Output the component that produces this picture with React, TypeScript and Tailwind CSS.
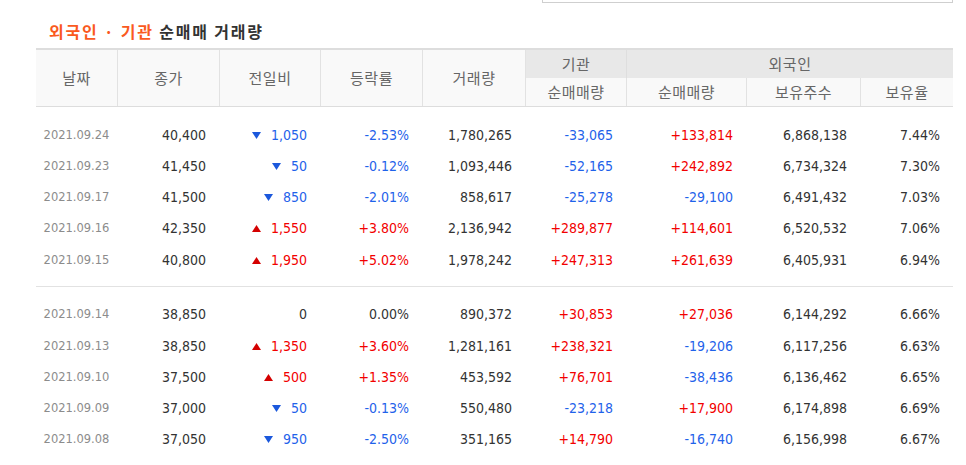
import React from 'react';

type Row = {
    date: string;
    close: string;
    diff: string;
    dir: 'up' | 'down' | 'none';
    rate: string;
    volume: string;
    inst: string;
    foreign: string;
    shares: string;
    ratio: string;
};

const groups: Row[][] = [
    [
        {date: '2021.09.24', close: '40,400', diff: '1,050', dir: 'down', rate: '-2.53%', volume: '1,780,265', inst: '-33,065', foreign: '+133,814', shares: '6,868,138', ratio: '7.44%'},
        {date: '2021.09.23', close: '41,450', diff: '50', dir: 'down', rate: '-0.12%', volume: '1,093,446', inst: '-52,165', foreign: '+242,892', shares: '6,734,324', ratio: '7.30%'},
        {date: '2021.09.17', close: '41,500', diff: '850', dir: 'down', rate: '-2.01%', volume: '858,617', inst: '-25,278', foreign: '-29,100', shares: '6,491,432', ratio: '7.03%'},
        {date: '2021.09.16', close: '42,350', diff: '1,550', dir: 'up', rate: '+3.80%', volume: '2,136,942', inst: '+289,877', foreign: '+114,601', shares: '6,520,532', ratio: '7.06%'},
        {date: '2021.09.15', close: '40,800', diff: '1,950', dir: 'up', rate: '+5.02%', volume: '1,978,242', inst: '+247,313', foreign: '+261,639', shares: '6,405,931', ratio: '6.94%'},
    ],
    [
        {date: '2021.09.14', close: '38,850', diff: '0', dir: 'none', rate: '0.00%', volume: '890,372', inst: '+30,853', foreign: '+27,036', shares: '6,144,292', ratio: '6.66%'},
        {date: '2021.09.13', close: '38,850', diff: '1,350', dir: 'up', rate: '+3.60%', volume: '1,281,161', inst: '+238,321', foreign: '-19,206', shares: '6,117,256', ratio: '6.63%'},
        {date: '2021.09.10', close: '37,500', diff: '500', dir: 'up', rate: '+1.35%', volume: '453,592', inst: '+76,701', foreign: '-38,436', shares: '6,136,462', ratio: '6.65%'},
        {date: '2021.09.09', close: '37,000', diff: '50', dir: 'down', rate: '-0.13%', volume: '550,480', inst: '-23,218', foreign: '+17,900', shares: '6,174,898', ratio: '6.69%'},
        {date: '2021.09.08', close: '37,050', diff: '950', dir: 'down', rate: '-2.50%', volume: '351,165', inst: '+14,790', foreign: '-16,740', shares: '6,156,998', ratio: '6.67%'},
    ],
];

const cols = 'grid grid-cols-[81px_102px_101px_102px_103px_101px_120px_114px_93px]';
const num = "font-['DejaVu_Sans_Condensed','DejaVu_Sans',sans-serif] font-stretch-condensed text-[14px]";

function signColor(v: string) {
    if (v.startsWith('+')) return 'text-[#f20000]';
    if (v.startsWith('-')) return 'text-[#1f62ea]';
    return 'text-[#333]';
}

function Arrow({dir}: {dir: 'up' | 'down'}) {
    return (
        <svg width="9" height="7" viewBox="0 0 9 7" className="mr-[10px] shrink-0">
            {dir === 'up'
                ? <polygon points="4.5,0 9,7 0,7" fill="#d40000"/>
                : <polygon points="0,0 9,0 4.5,7" fill="#1b58dc"/>}
        </svg>
    );
}

function Cell({children, className = ''}: {children: React.ReactNode; className?: string}) {
    return <div className={`flex items-center justify-end pr-[13px] ${className}`}>{children}</div>;
}

export default function App() {
    return (
        <div className="w-[966px] h-[465px] overflow-hidden bg-white">
            <div className="ml-[542px] w-[411px] h-[3px] border-x border-b border-[#cfcfcf]"/>

            <h2 className="mt-[18px] pl-[49px] h-[20px] leading-[20px] text-[16px] tracking-[1.8px] font-bold font-['Noto_Sans_CJK_KR',sans-serif] text-[#333]">
                <span className="text-[#fa5a1e]">외국인 · 기관</span> 순매매 거래량
            </h2>

            <div className="ml-[36px] mt-[7px] w-[917px]">
                <div className={`${cols} grid-rows-[28px_28px] border-t-2 border-b border-[#dddddd] text-[15px] tracking-[0.5px] text-[#666] font-['Noto_Sans_CJK_KR',sans-serif]`}>
                    <div className="row-span-2 flex items-center justify-center bg-[#f9f9f9]">날짜</div>
                    <div className="row-span-2 flex items-center justify-center bg-[#f9f9f9] border-l border-[#e2e2e2]">종가</div>
                    <div className="row-span-2 flex items-center justify-center bg-[#f9f9f9] border-l border-[#e2e2e2]">전일비</div>
                    <div className="row-span-2 flex items-center justify-center bg-[#f9f9f9] border-l border-[#e2e2e2]">등락률</div>
                    <div className="row-span-2 flex items-center justify-center bg-[#f9f9f9] border-l border-[#e2e2e2]">거래량</div>
                    <div className="flex items-center justify-center bg-[#e8e8e8] border-l border-[#e2e2e2]">기관</div>
                    <div className="col-span-3 flex items-center justify-center bg-[#e8e8e8] border-l border-[#dedede]">외국인</div>
                    <div className="flex items-center justify-center bg-[#f9f9f9] border-l border-[#e2e2e2]">순매매량</div>
                    <div className="flex items-center justify-center bg-[#f9f9f9] border-l border-[#e2e2e2]">순매매량</div>
                    <div className="flex items-center justify-center bg-[#f9f9f9] border-l border-[#e2e2e2]">보유주수</div>
                    <div className="flex items-center justify-center bg-[#f9f9f9] border-l border-[#e2e2e2]">보유율</div>
                </div>

                {groups.map((group, gi) => (
                    <div key={gi} className={`pt-[12.5px] pb-[10px] ${gi === 0 ? 'border-b border-[#e2e2e2]' : ''}`}>
                        {group.map((r) => (
                            <div key={r.date} className={`${cols} h-[31.25px] text-[#333] ${num}`}>
                                <div className="flex items-center justify-center font-['DejaVu_Sans',sans-serif] font-stretch-normal text-[11.5px] text-[#8c8c8c]">
                                    {r.date}
                                </div>
                                <Cell>{r.close}</Cell>
                                <Cell className={r.dir === 'up' ? 'text-[#f20000]' : r.dir === 'down' ? 'text-[#1f62ea]' : ''}>
                                    {r.dir !== 'none' && <Arrow dir={r.dir}/>}
                                    {r.diff}
                                </Cell>
                                <Cell className={signColor(r.rate)}>{r.rate}</Cell>
                                <Cell>{r.volume}</Cell>
                                <Cell className={signColor(r.inst)}>{r.inst}</Cell>
                                <Cell className={signColor(r.foreign)}>{r.foreign}</Cell>
                                <Cell>{r.shares}</Cell>
                                <Cell>{r.ratio}</Cell>
                            </div>
                        ))}
                    </div>
                ))}
            </div>
        </div>
    );
}
